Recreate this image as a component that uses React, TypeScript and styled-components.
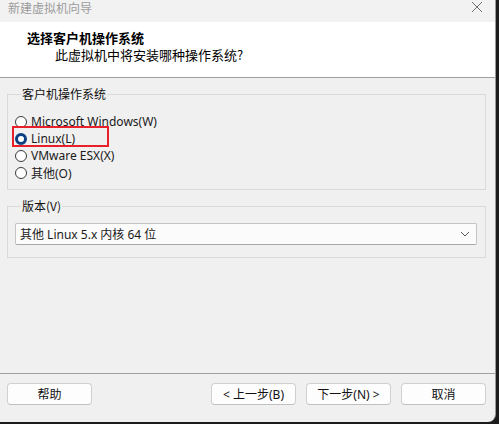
import React, { useState } from 'react';
import styled, { createGlobalStyle } from 'styled-components';

const GlobalStyle = createGlobalStyle`
  html, body {
    margin: 0;
    padding: 0;
    background: #202020;
  }
  body {
    font-family: "Noto Sans", "Noto Sans CJK SC", sans-serif;
    font-size: 12px;
    color: #1a1a1a;
  }
`;

const Backdrop = styled.div`
  width: 499px;
  height: 424px;
  background: #1c1c1c;
  overflow: hidden;
`;

const Window = styled.div`
  width: 495px;
  height: 422px;
  background: #f0f0f0;
  border-right: 1px solid #9a9a9a;
  border-bottom-right-radius: 8px;
  display: flex;
  flex-direction: column;
  overflow: hidden;
`;

const TitleBar = styled.div`
  height: 22px;
  background: #f2f2f2;
  display: flex;
  align-items: center;
  justify-content: space-between;
  padding: 0 8px 0 8px;
  flex-shrink: 0;
`;

const TitleText = styled.span`
  font-family: "Noto Sans CJK SC", sans-serif;
  font-size: 12px;
  color: #9c9c9c;
  line-height: 1;
  margin-top: -7px;
`;

const CloseBtn = styled.svg`
  width: 12px;
  height: 12px;
  margin-top: -8px;
  margin-right: 4px;
`;

const Header = styled.div`
  height: 56px;
  background: #ffffff;
  border-bottom: 1px solid #a0a0a0;
  flex-shrink: 0;
  padding-top: 7px;
  box-sizing: border-box;
`;

const HeadTitle = styled.div`
  font-family: "Noto Sans CJK SC", sans-serif;
  font-size: 13px;
  font-weight: 700;
  line-height: 17px;
  padding-left: 27px;
  color: #000;
`;

const HeadSub = styled.div`
  font-family: "Noto Sans CJK SC", sans-serif;
  font-size: 13px;
  line-height: 17px;
  padding-left: 55px;
  color: #000;
`;

const Body = styled.div`
  flex: 1;
  padding: 9px 9px 0 7px;
  display: flex;
  flex-direction: column;
  gap: 9px;
`;

const Group = styled.fieldset<{ $h: number }>`
  position: relative;
  margin: 0;
  border: 1px solid #dadada;
  padding: 0 8px 0 7px;
  height: ${(p) => p.$h}px;
  box-sizing: border-box;
`;

const Legend = styled.legend`
  font-family: "Noto Sans CJK SC", sans-serif;
  font-size: 12px;
  padding: 0 1px;
  margin-left: 6px;
  line-height: 14px;
  color: #111;
`;

const RadioList = styled.div`
  display: flex;
  flex-direction: column;
  padding-top: 12px;
`;

const RadioRow = styled.label`
  display: flex;
  align-items: center;
  height: 17px;
  gap: 4px;
  font-family: "Noto Sans", "Noto Sans CJK SC", sans-serif;
  font-size: 12px;
  color: #1a1a1a;
  cursor: default;
`;

const RadioDot = styled.span<{ $on: boolean }>`
  width: 12px;
  height: 12px;
  border-radius: 50%;
  box-sizing: border-box;
  background: #fff;
  border: ${(p) => (p.$on ? '3.5px solid #0c3f82' : '1px solid #3a3a3a')};
  flex-shrink: 0;
`;

const Highlight = styled.div`
  position: absolute;
  left: 4px;
  top: 25px;
  width: 97px;
  height: 21px;
  border: 2px solid #e8202a;
  box-sizing: border-box;
  pointer-events: none;
`;

const Select = styled.div`
  margin-top: 10px;
  height: 22px;
  box-sizing: border-box;
  background: #fbfbfb;
  border: 1px solid #c4c4c4;
  border-bottom-color: #a6a6a6;
  border-radius: 2px;
  display: flex;
  align-items: center;
  justify-content: space-between;
  padding: 0 6px 0 4px;
  font-family: "Noto Sans", "Noto Sans CJK SC", sans-serif;
  font-size: 12px;
  color: #1a1a1a;
`;

const Footer = styled.div`
  height: 39px;
  border-top: 1px solid #a0a0a0;
  display: flex;
  align-items: flex-start;
  padding: 9px 9px 0 7px;
  gap: 10px;
  flex-shrink: 0;
`;

const Button = styled.button<{ $push?: boolean }>`
  width: 85px;
  height: 22px;
  background: #fdfdfd;
  border: 1px solid #d0d0d0;
  border-bottom-color: #c0c0c0;
  border-radius: 4px;
  font-family: "Noto Sans", "Noto Sans CJK SC", sans-serif;
  font-size: 12px;
  color: #111;
  padding: 0;
  margin-left: ${(p) => (p.$push ? 'auto' : '0')};
`;

const options = ['Microsoft Windows(W)', 'Linux(L)', 'VMware ESX(X)', '其他(O)'];

function App() {
  const [os, setOs] = useState(1);

  return (
    <>
      <GlobalStyle />
      <Backdrop>
        <Window>
          <TitleBar>
            <TitleText>新建虚拟机向导</TitleText>
            <CloseBtn viewBox="0 0 12 12">
              <path d="M1 1 L11 11 M11 1 L1 11" stroke="#707070" strokeWidth="1" fill="none" />
            </CloseBtn>
          </TitleBar>
          <Header>
            <HeadTitle>选择客户机操作系统</HeadTitle>
            <HeadSub>此虚拟机中将安装哪种操作系统?</HeadSub>
          </Header>
          <Body>
            <Group $h={103}>
              <Legend>客户机操作系统</Legend>
              <RadioList>
                {options.map((o, i) => (
                  <RadioRow key={o} onClick={() => setOs(i)}>
                    <RadioDot $on={os === i} />
                    {o}
                  </RadioRow>
                ))}
              </RadioList>
              <Highlight />
            </Group>
            <Group $h={59}>
              <Legend>版本(V)</Legend>
              <Select>
                <span>其他 Linux 5.x 内核 64 位</span>
                <svg width="10" height="6" viewBox="0 0 10 6">
                  <path d="M1 1 L5 5 L9 1" stroke="#555" strokeWidth="1" fill="none" />
                </svg>
              </Select>
            </Group>
          </Body>
          <Footer>
            <Button>帮助</Button>
            <Button $push>&lt; 上一步(B)</Button>
            <Button>下一步(N) &gt;</Button>
            <Button>取消</Button>
          </Footer>
        </Window>
      </Backdrop>
    </>
  );
}

export default App;
